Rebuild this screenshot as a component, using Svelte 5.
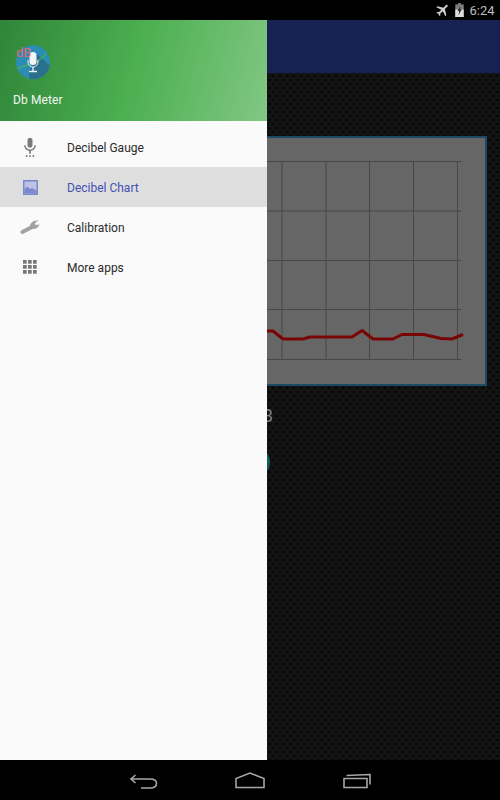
<script>
  const items = [
    { label: 'Decibel Gauge', icon: 'mic' },
    { label: 'Decibel Chart', icon: 'image', selected: true },
    { label: 'Calibration', icon: 'wrench' },
    { label: 'More apps', icon: 'apps' }
  ]

  const gridX = [62, 106, 150, 194, 238, 282, 326, 369.5, 413.5, 457.5]
  const gridY = [161.5, 211, 260.5, 309.5, 359.5]
  const trace = '15,334 267,331 273,331 283,339 303,339 310,337 352,337 362,330.5 373,339 393,339 402,334.5 424,334.5 441,338.5 452,339 463,334.5'
</script>

<div class="screen">
  <div class="status">
    <svg class="plane" width="16" height="16" viewBox="0 0 24 24">
      <path transform="rotate(45 12 12)" d="M21 16v-2l-8-5V3.5c0-.83-.67-1.5-1.5-1.5S10 2.67 10 3.5V9l-8 5v2l8-2.5V19l-2 1.5V22l3.5-1 3.5 1v-1.5L13 19v-5.5l8 2.5z" fill="#cfcfcf"/>
    </svg>
    <svg class="battery" width="9" height="14" viewBox="0 0 9 15">
      <rect x="3" y="0" width="3" height="2" fill="#7e7e7e"/>
      <rect x="0" y="1.5" width="9" height="13.5" fill="#7e7e7e"/>
      <rect x="0" y="7" width="9" height="8" fill="#dcdcdc"/>
      <path d="M5.5 3 L2.5 8.5 H4.2 L3.5 13 L6.8 6.8 H5 Z" fill="#222"/>
    </svg>
    <span class="clock">6:24</span>
  </div>

  <div class="main">
    <div class="toolbar"></div>
    <div class="content">
      <div class="card">
        <svg width="470" height="246" viewBox="15 138 470 246">
          {#each gridX as x}
            <line x1={x} y1="161" x2={x} y2="360" stroke="#474747" stroke-width="1"/>
          {/each}
          {#each gridY as y}
            <line x1="15" y1={y} x2="461.5" y2={y} stroke="#474747" stroke-width="1"/>
          {/each}
          <polyline points={trace} fill="none" stroke="#7a0505" stroke-width="3" stroke-linejoin="round"/>
        </svg>
      </div>
      <div class="reading">44 dB</div>
      <div class="round"></div>
    </div>

    <nav class="drawer">
      <header class="head">
        <svg class="logo" width="40" height="38" viewBox="0 0 40 38">
          <defs>
            <clipPath id="disc"><circle cx="20" cy="20.3" r="17"/></clipPath>
          </defs>
          <circle cx="20" cy="20.3" r="17" fill="#2b8db3"/>
          <g clip-path="url(#disc)">
            <path d="M16 30 L24 12 L44 30 L30 44 L16 36 Z" fill="#2a6f8e"/>
            <polyline points="3,27 17,22 24,20 33,12" fill="none" stroke="#4caf50" stroke-width="1.2"/>
          </g>
          <rect x="16.5" y="10" width="7" height="13" rx="3.5" fill="#f2f6f8"/>
          <path d="M15 18 V20 a5 5 0 0 0 10 0 V18" fill="none" stroke="#e8eef1" stroke-width="1"/>
          <path d="M20 25 V29 M16 29.5 H24" stroke="#f2f6f8" stroke-width="1.3"/>
          <text x="3" y="14.5" class="db">dB</text>
        </svg>
        <span class="title">Db Meter</span>
      </header>
      <ul>
        {#each items as item}
          <li class:selected={item.selected}>
            <span class="icon">
              {#if item.icon === 'mic'}
                <svg width="20" height="20" viewBox="0 0 24 24">
                  <path d="M7 24h2v-2H7v2zm5-11c1.66 0 2.99-1.34 2.99-3L15 4c0-1.66-1.34-3-3-3S9 2.34 9 4v6c0 1.66 1.34 3 3 3zm-1 11h2v-2h-2v2zm4 0h2v-2h-2v2zm4-14h-1.7c0 3-2.54 5.1-5.3 5.1S6.7 13 6.7 10H5c0 3.41 2.72 6.23 6 6.72V20h2v-3.28c3.28-.49 6-3.31 6-6.72z" fill="#7a7a7a"/>
                </svg>
              {:else if item.icon === 'image'}
                <svg width="15" height="15" viewBox="0 0 15 15">
                  <rect width="15" height="15" fill="#7b88cb"/>
                  <rect x="1.5" y="1.5" width="12" height="12" fill="#bcc3e6"/>
                  <path d="M1.5 13.5 V9 L4.5 6.5 L7 9 L9 8 L13.5 10.5 V13.5 Z" fill="#7b88cb"/>
                </svg>
              {:else if item.icon === 'wrench'}
                <svg width="20" height="16" viewBox="0 0 20 16">
                  <line x1="2.5" y1="13" x2="12" y2="8" stroke="#a2a2a2" stroke-width="4" stroke-linecap="round"/>
                  <path d="M10 6 C11 3 14 1 18.5 1.5 L15 4 L15.5 6 L19.5 5.5 C18.5 9 15 10.5 11.5 10 Z" fill="#a2a2a2"/>
                </svg>
              {:else}
                <svg width="14" height="14" viewBox="0 0 14 14">
                  {#each [0, 5, 10] as y}
                    {#each [0, 5, 10] as x}
                      <rect {x} {y} width="3.7" height="3.7" fill="#777"/>
                    {/each}
                  {/each}
                </svg>
              {/if}
            </span>
            <span class="label">{item.label}</span>
          </li>
        {/each}
      </ul>
    </nav>
  </div>

  <div class="navbar">
    <svg width="500" height="40" viewBox="0 760 500 40" fill="none" stroke="#a6a6a6" stroke-width="1.6">
      <path d="M135.5 775 L131 779 L135.5 783 M131 779 H150 C154.5 779 156.5 781 156.5 783.5 C156.5 786 154.5 788 150 788 H141"/>
      <path d="M236 787.5 V778.5 L250 773 L264 778.5 V787.5 Z"/>
      <path d="M344 778.5 H367 V787.5 H344 Z M346.5 775.5 L370 774.5 V784.5"/>
    </svg>
  </div>
</div>

<style>
  :global(body) {
    background: #000;
  }

  .screen {
    display: flex;
    flex-direction: column;
    width: 500px;
    height: 800px;
    overflow: hidden;
    font-family: Roboto, sans-serif;
  }

  .status {
    display: flex;
    align-items: center;
    justify-content: flex-end;
    flex: none;
    height: 20px;
    padding-right: 5.5px;
    background: #000;
  }

  .plane {
    margin-right: 4px;
  }

  .battery {
    margin-right: 5px;
  }

  .clock {
    font-size: 13px;
    color: #bdbdbd;
  }

  .main {
    position: relative;
    flex: 1;
    min-height: 0;
    background-color: #131313;
    background-image:
      radial-gradient(circle, #050505 1px, transparent 1.4px),
      radial-gradient(circle, #050505 1px, transparent 1.4px);
    background-size: 7px 8px;
    background-position: 0 0, 3.5px 4px;
  }

  .toolbar {
    height: 53px;
    background: #172152;
  }

  .content {
    display: flex;
    flex-direction: column;
    align-items: center;
    padding: 63px 13px 0;
  }

  .card {
    box-sizing: border-box;
    width: 474px;
    height: 250px;
    border: 2px solid #1d4a63;
    background: #666;
  }

  .card svg {
    display: block;
  }

  .reading {
    margin-top: 19px;
    font-size: 18px;
    line-height: 21px;
    color: #7e7e7e;
  }

  .round {
    width: 30px;
    height: 30px;
    margin: 21px 0 0 10px;
    border-radius: 50%;
    background: #0f5f5c;
  }

  .drawer {
    position: absolute;
    top: 0;
    left: 0;
    bottom: 0;
    width: 267px;
    background: #fafafa;
  }

  .head {
    display: flex;
    flex-direction: column;
    align-items: flex-start;
    box-sizing: border-box;
    height: 100.5px;
    padding: 22px 0 0 13px;
    background: linear-gradient(105deg, #2f8539 0%, #4caf50 50%, #81c784 100%);
  }

  .logo {
    display: block;
  }

  .db {
    font-family: Roboto, sans-serif;
    font-size: 13px;
    fill: #e2686e;
  }

  .title {
    margin-top: 13px;
    font-size: 12px;
    letter-spacing: 0.1px;
    color: #f3f8f3;
  }

  ul {
    margin: 0;
    padding: 6.8px 0 0;
    list-style: none;
  }

  li {
    display: flex;
    align-items: center;
    height: 40px;
    color: #2b2b2b;
  }

  li.selected {
    background: #dedede;
    color: #3f51b5;
  }

  .icon {
    display: flex;
    align-items: center;
    justify-content: center;
    flex: none;
    width: 60px;
    margin-right: 7px;
  }

  .icon svg {
    display: block;
  }

  .label {
    padding-top: 2px;
    font-size: 12px;
  }

  .navbar {
    flex: none;
    height: 40px;
    background: #000;
  }

  .navbar svg {
    display: block;
  }
</style>
